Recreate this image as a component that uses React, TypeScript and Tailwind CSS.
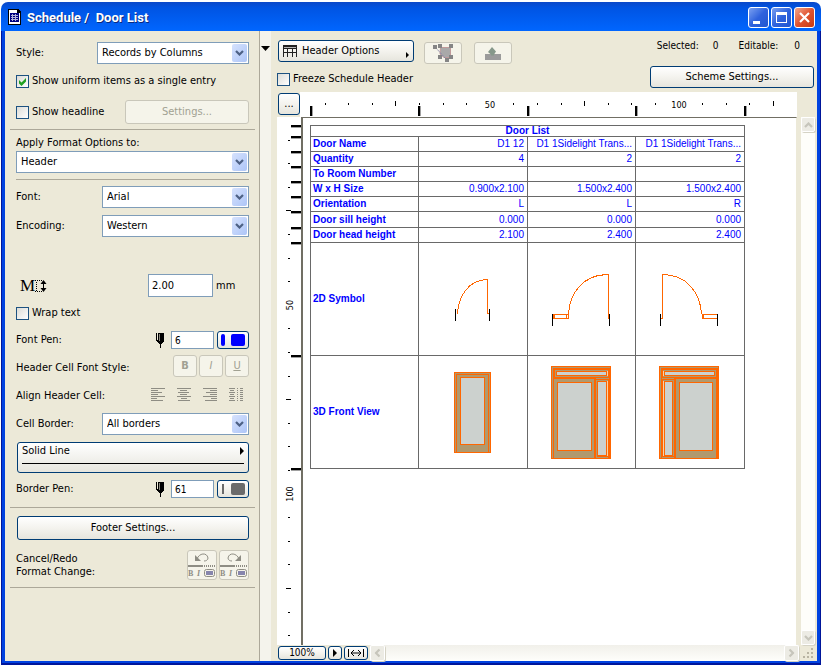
import React from 'react';
import clsx from 'clsx';

const RULER_STEP = 23.6;

const columnEdges = [310, 418, 527, 635, 744];
const rowEdges = [125, 136, 151, 166, 181, 196, 211, 227, 242, 355, 468];

const textRows = [
  { label: 'Door Name', values: ['D1 12', 'D1 1Sidelight Trans...', 'D1 1Sidelight Trans...'], height: 'h-[15px]' },
  { label: 'Quantity', values: ['4', '2', '2'], height: 'h-[15px]' },
  { label: 'To Room Number', values: ['', '', ''], height: 'h-[15px]' },
  { label: 'W x H Size', values: ['0.900x2.100', '1.500x2.400', '1.500x2.400'], height: 'h-[15px]' },
  { label: 'Orientation', values: ['L', 'L', 'R'], height: 'h-[15px]' },
  { label: 'Door sill height', values: ['0.000', '0.000', '0.000'], height: 'h-[16px]' },
  { label: 'Door head height', values: ['2.100', '2.400', '2.400'], height: 'h-[15px]' },
];

const Chevron = ({ className }: { className?: string }) => (
  <svg viewBox="0 0 9 6" className={clsx('w-[9px] h-[6px]', className)}>
    <path d="M1 1 L4.5 4.5 L8 1" fill="none" stroke="currentColor" strokeWidth="2.2" />
  </svg>
);

const Select = ({ id, value, className }: { id: string; value: string; className?: string }) => (
  <div className={clsx('relative h-[22px]', className)}>
    <select
      id={id}
      defaultValue={value}
      className="appearance-none w-full h-full bg-white border border-[#7f9db9] pl-1 pr-5 leading-[20px] outline-none"
    >
      <option>{value}</option>
    </select>
    <span className="pointer-events-none absolute right-[2px] top-[2px] w-[15px] h-[18px] rounded-[2px] bg-linear-to-br from-[#d6e2fd] to-[#adc5f7] text-[#4d6185] flex items-center justify-center">
      <Chevron />
    </span>
  </div>
);

const Check = ({ id, label, checked }: { id: string; label: string; checked?: boolean }) => (
  <div className="flex items-center gap-[3px] h-[14px]">
    <span className="relative w-[13px] h-[13px] shrink-0">
      <input
        id={id}
        type="checkbox"
        defaultChecked={checked}
        className="peer appearance-none block w-[13px] h-[13px] border border-[#1d5281] bg-linear-to-br from-[#dcdcd7] to-white"
      />
      <svg viewBox="0 0 13 13" className="pointer-events-none absolute inset-0 hidden peer-checked:block">
        <path d="M3 5v3.500L5.500 11L10 6.500V3L5.500 7.500z" fill="#21a121" />
      </svg>
    </span>
    <label htmlFor={id} className="whitespace-nowrap">{label}</label>
  </div>
);

const Button = ({
  children,
  className,
  disabled,
  label,
}: {
  children: React.ReactNode;
  className?: string;
  disabled?: boolean;
  label?: string;
}) => (
  <button
    type="button"
    aria-label={label}
    disabled={disabled}
    className={clsx(
      'rounded-[3px] border flex items-center justify-center',
      disabled
        ? 'border-[#c9c7ba] bg-[#f5f4ea] text-[#a1a192]'
        : 'border-[#003c74] bg-linear-to-b from-white via-[#f4f3ee] to-[#e6e5dd]',
      className,
    )}
  >
    {children}
  </button>
);

const Divider = ({ className }: { className?: string }) => <hr className={clsx('border-0 h-px bg-[#aca899]', className)} />;

const PenIcon = () => (
  <svg viewBox="0 0 8 15" className="w-[8px] h-[15px]" shapeRendering="crispEdges">
    <path d="M0 0h1v7h1V0h6v9H7v1H6v1H5v4H4v-4H3v-1H2V9H1V8H0z" />
    <path d="M3 1v7" stroke="#ece9d8" strokeWidth="0.600" />
  </svg>
);

const PenRow = ({
  id,
  label,
  value,
  line,
  swatch,
}: {
  id: string;
  label: string;
  value: string;
  line: React.ReactNode;
  swatch: string;
}) => (
  <div className="flex items-center h-[18px]">
    <label htmlFor={id} className="flex-1">{label}</label>
    <PenIcon />
    <input
      id={id}
      defaultValue={value}
      className="ml-[7px] w-[43px] h-[18px] bg-white border border-[#7f9db9] px-[3px] text-[10px] outline-none"
    />
    <Button label={`${label} color`} className="ml-[3px] w-[32px] h-[18px] gap-[6px]">
      {line}
      <span className={clsx('w-[14px] h-[12px] rounded-[2px]', swatch)} />
    </Button>
  </div>
);

const AlignIcon = ({ kind }: { kind: 'left' | 'center' | 'right' | 'split' }) => {
  const widths = [14, 7, 11, 7, 14, 6, 12];
  return (
    <svg viewBox="0 0 14 14" className="w-[14px] h-[14px]" fill="#8e8d84" shapeRendering="crispEdges">
      {widths.map((w, i) => {
        if (kind === 'split') {
          return (
            <g key={i}>
              <rect x={i % 2} y={i * 2} width={i % 2 ? 4 : 6} height="1" />
              <rect x="8" y={i * 2} width="1" height="1" />
              <rect x="11" y={i * 2} width="3" height="1" />
            </g>
          );
        }
        const x = kind === 'left' ? 0 : kind === 'right' ? 14 - w : Math.floor((14 - w) / 2);
        return <rect key={i} x={x} y={i * 2} width={w} height="1" />;
      })}
    </svg>
  );
};

const HistoryIcon = ({ redo }: { redo?: boolean }) => (
  <svg viewBox="0 0 28 28" className="w-[28px] h-[28px]">
    <g transform={redo ? 'translate(28 0) scale(-1 1)' : undefined}>
      <path d="M9 8C11 2 19 1 20 7C20 9 18 10 16 10" fill="none" stroke="#8e8d84" />
      <path d="M7 4v6h6z" fill="#8e8d84" />
    </g>
    <path d="M0 15h15" stroke="#8e8d84" strokeWidth="2" />
    <path d="M16 15h12" stroke="#8e8d84" strokeWidth="2" strokeDasharray="1 1" />
    <text x="0" y="25" className="font-['Liberation_Serif',serif] text-[8px] font-bold" fill="#8e8d84">B</text>
    <text x="9" y="25" className="font-['Liberation_Serif',serif] text-[8px] font-bold italic" fill="#8e8d84">I</text>
    <rect x="16.500" y="18.500" width="10" height="7" rx="2" fill="#f5f4ea" stroke="#8e8d84" />
    <rect x="18" y="20" width="7" height="4" fill="#8685ad" />
  </svg>
);

const FormatPanel = () => (
  <section className="w-[255px] shrink-0 border-r border-[#aca899] pl-[11px] pr-[10px] pt-[11px] flex flex-col">
    <div className="flex items-center justify-between">
      <label htmlFor="style">Style:</label>
      <Select id="style" value="Records by Columns" className="w-[152px]" />
    </div>
    <div className="mt-[10px]">
      <Check id="uniform" label="Show uniform items as a single entry" checked />
    </div>
    <div className="mt-3 flex items-center justify-between">
      <Check id="headline" label="Show headline" />
      <Button disabled className="w-[124px] h-[24px]">Settings...</Button>
    </div>
    <Divider className="mt-[5px] -mx-[6px]" />
    <label htmlFor="apply" className="mt-[6px]">Apply Format Options to:</label>
    <Select id="apply" value="Header" className="mt-px" />
    <Divider className="mt-[6px]" />
    <div className="mt-[6px] flex items-center justify-between">
      <label htmlFor="font">Font:</label>
      <Select id="font" value="Arial" className="w-[147px]" />
    </div>
    <div className="mt-[7px] flex items-center justify-between">
      <label htmlFor="encoding">Encoding:</label>
      <Select id="encoding" value="Western" className="w-[147px]" />
    </div>
    <div className="mt-[37px] flex items-center h-[23px]">
      <span className="ml-1 flex-1 flex items-center">
        <span className="font-['Liberation_Serif',serif] text-[17px] leading-[20px]">M</span>
        <svg viewBox="0 0 12 14" className="w-[12px] h-[14px]">
          <path d="M0 1.500h7M0 12.500h7M1.500 3v9" stroke="#000" strokeDasharray="1 1" />
          <path d="M8.500 3v8" stroke="#000" />
          <path d="M5.500 5L8.500 1l3 4zM5.500 9l3 4 3-4z" />
        </svg>
      </span>
      <input
        id="size"
        aria-label="Text height"
        defaultValue="2.00"
        className="w-[65px] h-[23px] bg-white border border-[#7f9db9] px-[3px] outline-none"
      />
      <label htmlFor="size" className="w-[36px] pl-[3px]">mm</label>
    </div>
    <div className="mt-[9px]">
      <Check id="wrap" label="Wrap text" />
    </div>
    <div className="mt-[11px]">
      <PenRow
        id="fontpen"
        label="Font Pen:"
        value="6"
        line={<span className="w-[4px] h-[12px] rounded-[2px] bg-[#0000ff]" />}
        swatch="bg-[#0000ff]"
      />
    </div>
    <div className="mt-[6px] flex items-center justify-between">
      <span className="pt-1">Header Cell Font Style:</span>
      <div className="flex gap-[2px]">
        <Button disabled className="w-[24px] h-[22px] font-bold">B</Button>
        <Button disabled className="w-[24px] h-[22px] italic">I</Button>
        <Button disabled className="w-[24px] h-[22px] underline">U</Button>
      </div>
    </div>
    <div className="mt-[10px] h-[16px] flex items-center justify-between">
      <span className="pt-[2px]">Align Header Cell:</span>
      <div className="flex gap-[12px] pr-[6px]">
        <AlignIcon kind="left" />
        <AlignIcon kind="center" />
        <AlignIcon kind="right" />
        <AlignIcon kind="split" />
      </div>
    </div>
    <div className="mt-[10px] flex items-center justify-between">
      <label htmlFor="border">Cell Border:</label>
      <Select id="border" value="All borders" className="w-[147px]" />
    </div>
    <button
      type="button"
      className="mt-[7px] ml-px h-[31px] flex flex-col rounded-[3px] border border-[#003c74] bg-linear-to-b from-white to-[#e6e5dd] px-1"
    >
      <span className="w-full flex items-center justify-between border-b border-black h-[21px] pb-1">
        Solid Line
        <svg viewBox="0 0 4 8" className="w-[4px] h-[8px]"><path d="M0 0L4 4L0 8z" /></svg>
      </span>
    </button>
    <div className="mt-[7px]">
      <PenRow
        id="borderpen"
        label="Border Pen:"
        value="61"
        line={<span className="w-[2px] h-[10px] mx-px bg-[#6b6b6b]" />}
        swatch="bg-[#6b6b6b]"
      />
    </div>
    <Divider className="mt-[9px] -mx-[6px]" />
    <Button className="mt-2 ml-px h-[24px]">Footer Settings...</Button>
    <div className="mt-[10px] flex justify-between">
      <p className="leading-[13px] pt-[2px]">
        Cancel/Redo
        <br />
        Format Change:
      </p>
      <div className="flex gap-[2px]">
        <Button disabled label="Cancel format change" className="w-[30px] h-[30px]"><HistoryIcon /></Button>
        <Button disabled label="Redo format change" className="w-[30px] h-[30px]"><HistoryIcon redo /></Button>
      </div>
    </div>
    <Divider className="mt-[7px] -mx-[6px]" />
  </section>
);

const HorizontalRuler = () => (
  <svg className="flex-1 min-w-0 h-[25px] bg-white" shapeRendering="crispEdges">
    {Array.from({ length: 20 }, (_, i) => {
      const n = i + 1;
      const x = Math.round(n * RULER_STEP) + 1;
      if (n % 8 === 0) {
        return <text key={n} x={x} y="16" textAnchor="middle" className="text-[9px]">{(n / 8) * 50}</text>;
      }
      return <rect key={n} x={x} y={n % 4 ? 11 : 9} width="1" height={n % 4 ? 2 : 5} />;
    })}
    {columnEdges.map((x) => (
      <g key={x}>
        <rect x={x - 300} y="14" width="2" height="10" />
        <rect x={x - 298} y="14" width="1" height="10" fill="#a0a0a0" />
      </g>
    ))}
  </svg>
);

const VerticalRuler = () => (
  <svg className="w-[24px] shrink-0 h-full bg-white" shapeRendering="crispEdges">
    {Array.from({ length: 22 }, (_, i) => {
      const n = i + 1;
      const y = Math.round(n * RULER_STEP) - 1;
      if (n % 8 === 0) {
        return (
          <text key={n} transform={`translate(16 ${y}) rotate(-90)`} textAnchor="middle" className="text-[9px]">
            {(n / 8) * 50}
          </text>
        );
      }
      return <rect key={n} x={n % 4 ? 11 : 9} y={y} width={n % 4 ? 2 : 5} height="1" />;
    })}
    {rowEdges.map((y) => (
      <g key={y}>
        <rect x="14" y={y - 117} width="10" height="2" />
        <rect x="14" y={y - 115} width="10" height="1" fill="#a0a0a0" />
      </g>
    ))}
  </svg>
);

// Plan symbols, one drawing per door
const planSymbols = [
  <g key="single">
    <path d="M38.500 70.500C39.500 54 49 36.500 68.500 36.500V70.500h2M38.500 66v5" fill="none" stroke="#ff6600" />
    <path d="M36.500 66v12M70.500 66v12" stroke="#000" />
  </g>,
  <g key="left">
    <path d="M40.500 71.500C41.500 50 55 31.500 80.500 31.500V75.500M25 71.500h15.500v4H25zM26.500 71.500v4M38.500 71.500v4" fill="none" stroke="#ff6600" />
    <path d="M24.500 71v12M81.500 71v12" stroke="#000" />
  </g>,
  <g key="right">
    <path d="M65.500 71.500C64.500 50 51 31.500 26.500 31.500V75.500h-2v-4M66 71.500h15.500v4H66zM67.500 71.500v4" fill="none" stroke="#ff6600" />
    <path d="M24.500 71v12M81.500 71v12" stroke="#000" />
  </g>,
];

const frontViews = [
  <g key="single">
    <rect x="35.500" y="16.500" width="36" height="80" fill="#b0996e" stroke="#ff6600" />
    <path d="M37.500 96V18.500h32V96" fill="none" stroke="#ff6600" />
    <rect x="41.500" y="21.500" width="24" height="67" fill="#ccd1ce" stroke="#ff6600" />
  </g>,
  <g key="left">
    <rect x="23" y="10" width="60" height="93" fill="#ff6600" />
    <path d="M24.500 102V11.500H82" fill="none" stroke="#b0996e" />
    <rect x="27.500" y="14.500" width="52" height="6" fill="none" stroke="#b0996e" />
    <rect x="29" y="16" width="49" height="3" fill="#ccd1ce" />
    <rect x="26" y="23" width="40" height="79" fill="#b0996e" />
    <rect x="29.500" y="26.500" width="34" height="68" fill="#ccd1ce" stroke="#ff6600" />
    <path d="M68 22.500h13M68.500 101V24.500H80M68 101.500h12" fill="none" stroke="#b0996e" />
    <path d="M79.500 15v5M79.500 25v75" stroke="#f5d3a8" />
    <rect x="70" y="26" width="8" height="73" fill="#ccd1ce" />
  </g>,
  <g key="right">
    <rect x="23" y="10" width="60" height="93" fill="#ff6600" />
    <path d="M24.500 102V11.500H82" fill="none" stroke="#b0996e" />
    <rect x="27.500" y="14.500" width="52" height="6" fill="none" stroke="#b0996e" />
    <rect x="29" y="16" width="49" height="3" fill="#ccd1ce" />
    <rect x="40" y="23" width="40" height="79" fill="#b0996e" />
    <rect x="43.500" y="26.500" width="33" height="68" fill="#ccd1ce" stroke="#ff6600" />
    <path d="M26 22.500h12M27 24.500h10.500V100M26 101.500h12" fill="none" stroke="#b0996e" />
    <path d="M27.500 15v5M27.500 25v75" stroke="#f5d3a8" />
    <rect x="29" y="26" width="7" height="73" fill="#ccd1ce" />
  </g>,
];

const DrawingRow = ({ label, drawings }: { label: string; drawings: React.ReactNode[] }) => (
  <tr className="h-[113px]">
    <th scope="row" className="border border-[#696969] p-0 pl-[2px] text-left">{label}</th>
    {drawings.map((drawing, i) => (
      <td key={i} className="border border-[#696969] p-0">
        <svg viewBox="0 0 107 112" className="block w-[107px] h-[112px]" shapeRendering="crispEdges">{drawing}</svg>
      </td>
    ))}
  </tr>
);

const DoorTable = () => (
  <table className="w-[435px] table-fixed border-collapse font-['Liberation_Sans',sans-serif] text-[10px] leading-[10px] text-[#0000ff]">
    <colgroup>
      <col className="w-[108px]" />
      <col className="w-[109px]" />
      <col className="w-[108px]" />
      <col className="w-[109px]" />
    </colgroup>
    <thead>
      <tr className="h-[11px]">
        <th colSpan={4} className="border border-[#696969] p-0">Door List</th>
      </tr>
    </thead>
    <tbody>
      {textRows.map((row) => (
        <tr key={row.label} className={row.height}>
          <th scope="row" className="border border-[#696969] p-0 pl-[2px] text-left whitespace-nowrap">{row.label}</th>
          {row.values.map((value, i) => (
            <td key={i} className="border border-[#696969] p-0 pr-[3px] text-right whitespace-nowrap">{value}</td>
          ))}
        </tr>
      ))}
      <DrawingRow label="2D Symbol" drawings={planSymbols} />
      <DrawingRow label="3D Front View" drawings={frontViews} />
    </tbody>
  </table>
);

const ScrollButton = ({ label, turn, className }: { label: string; turn?: string; className?: string }) => (
  <button
    type="button"
    aria-label={label}
    className={clsx(
      'shrink-0 rounded-[2px] border border-white bg-[#ecebe4] text-[#c6c5bb] shadow-[1px_1px_0_#d5d3c5] flex items-center justify-center',
      className,
    )}
  >
    <Chevron className={turn} />
  </button>
);

const Toolbar = () => (
  <div className="flex justify-between h-[61px] pl-[7px] pr-[3px]">
    <div className="pt-[9px]">
      <div className="flex items-start">
        <Button className="w-[136px] h-[22px] px-1">
          <svg viewBox="0 0 14 12" className="w-[14px] h-[12px] mr-[5px]" shapeRendering="crispEdges">
            <path d="M0 0h14v12h-1V4H1v8H0z" fill="#222" />
            <path d="M0 0h14v4H0zM4 4h1v8H4zM9 4h1v8H9zM1 7h12v1H1z" fill="#222" />
            <path d="M1 2.500h12" stroke="#b8b8b8" />
          </svg>
          <span className="flex-1 text-left">Header Options</span>
          <svg viewBox="0 0 3 6" className="w-[3px] h-[6px] mt-2"><path d="M0 0L3 3L0 6z" /></svg>
        </Button>
        <Button disabled label="Select in plan" className="ml-[10px] mt-[2px] w-[38px] h-[22px]">
          <svg viewBox="0 0 20 18" className="w-[20px] h-[18px]">
            <path d="M7.500 3.500h10v10H11L7 10z" fill="#a9a9a9" stroke="#c09a9a" />
            <path d="M3 4L13 15" stroke="#8583a8" strokeDasharray="2 1" />
            <path d="M0 1h4v4H0zM5 0h4v4H5zM16 0h4v4h-4zM5 11h4v4H5zM16 11h4v4h-4zM12 14h4v4h-4z" fill="#858585" />
          </svg>
        </Button>
        <Button disabled label="Select in 3D" className="ml-3 mt-[2px] w-[38px] h-[22px]">
          <svg viewBox="0 0 16 14" className="w-[16px] h-[14px]">
            <rect y="8" width="16" height="6" fill="#9b9b9b" />
            <path d="M7 1l4 4.500-2 3v1H6v-1L3 6z" fill="#86988a" />
          </svg>
        </Button>
      </div>
      <div className="mt-[8px] -ml-px">
        <Check id="freeze" label="Freeze Schedule Header" />
      </div>
    </div>
    <div className="flex flex-col items-end pt-[8px]">
      <div className="flex text-[10px] leading-[14px] pr-[14px]">
        <span>Selected:</span>
        <span className="ml-[14px]">0</span>
        <span className="ml-5">Editable:</span>
        <span className="ml-4">0</span>
      </div>
      <Button className="mt-[13px] w-[164px] h-[22px]">Scheme Settings...</Button>
    </div>
  </div>
);

const TitleBar = () => (
  <header className="h-[29px] shrink-0 rounded-t-[7px] flex items-center pl-[7px] pr-[6px] bg-linear-to-b from-[#0a48c8] from-0% via-[#0054e3] via-20% to-[#0066ff]">
    <svg viewBox="0 0 13 16" className="w-[13px] h-[16px]" shapeRendering="crispEdges">
      <path d="M0 0h10l3 3v13H0z" fill="#000" />
      <path d="M1 1h8v3h3v11H1z" fill="#fff" />
      <path d="M2 4h9v9H2z" fill="#000080" />
      <path d="M4.500 5v7M7.500 5v7M3 6.500h7M3 8.500h7M3 10.500h7" stroke="#fff" strokeOpacity="0.700" />
    </svg>
    <h1 className="ml-[6px] pt-[2px] flex-1 text-[13px] font-bold text-white whitespace-pre [text-shadow:1px_1px_0_#0a2a80] font-['Roboto','Liberation_Sans',sans-serif]">
      Schedule /  Door List
    </h1>
    <div className="flex gap-[2px] pt-[2px]">
      <button type="button" aria-label="Minimize" className="w-[21px] h-[21px] rounded-[3px] border border-white bg-linear-to-br from-[#7b9ff0] via-[#2f62dd] to-[#2157d0]">
        <svg viewBox="0 0 19 19"><path d="M4 13h7v3H4z" fill="#fff" /></svg>
      </button>
      <button type="button" aria-label="Maximize" className="w-[21px] h-[21px] rounded-[3px] border border-white bg-linear-to-br from-[#7b9ff0] via-[#2f62dd] to-[#2157d0]">
        <svg viewBox="0 0 19 19"><path d="M4 4h11v11H4zM5 7v7h9V7z" fill="#fff" fillRule="evenodd" /></svg>
      </button>
      <button type="button" aria-label="Close" className="w-[21px] h-[21px] rounded-[3px] border border-white bg-linear-to-br from-[#f0a58b] via-[#e0532f] to-[#c63a10]">
        <svg viewBox="0 0 19 19"><path d="M5 5l9 9M14 5l-9 9" stroke="#fff" strokeWidth="2.200" /></svg>
      </button>
    </div>
  </header>
);

const App: React.FC = () => (
  <div className="min-h-screen flex flex-col pt-[2px] pl-px bg-white font-['DejaVu_Sans_Condensed','Noto_Sans',sans-serif] text-[11px] leading-[14px] text-black">
    <TitleBar />
    <div className="flex-1 flex flex-col border-x border-b-2 border-[#00169a]">
      <main className="flex-1 flex bg-[#ece9d8] border-x-[3px] border-b-2 border-[#0042e0]">
        <FormatPanel />
        <div className="w-[11px] shrink-0 bg-[#f4f3ec] pt-[15px]">
          <button type="button" aria-label="Collapse panel" className="block w-[9px] h-[5px] mx-auto">
            <svg viewBox="0 0 9 5"><path d="M0 0h9L4.500 5z" /></svg>
          </button>
        </div>
        <section className="flex-1 min-w-0 flex flex-col">
          <Toolbar />
          <div className="flex pl-[6px] pr-[20px]">
            <Button label="Ruler options" className="ml-px mt-px w-[22px] h-[22px]">...</Button>
            <HorizontalRuler />
          </div>
          <div className="flex-1 flex pl-[6px]">
            <VerticalRuler />
            <div className="flex-1 min-w-0 bg-white border-l-2 border-t border-[#716f64] border-r border-r-[#ece9d8] p-[7px] overflow-hidden">
              <DoorTable />
            </div>
            <div className="w-[20px] shrink-0 pl-[4px] pr-[2px] flex flex-col">
              <div className="flex-1 flex flex-col justify-between bg-[#fefefa]">
                <ScrollButton label="Scroll up" turn="rotate-180" className="h-[15px]" />
                <ScrollButton label="Scroll down" className="h-[15px]" />
              </div>
            </div>
          </div>
          <div className="h-[16px] flex pl-[7px] pr-[2px]">
            <Button className="w-[48px] h-[14px] mt-px text-[10px]">100%</Button>
            <Button label="Zoom menu" className="ml-[2px] w-[14px] h-[14px] mt-px">
              <svg viewBox="0 0 4 8" className="w-[4px] h-[8px]"><path d="M0 0L4 4L0 8z" /></svg>
            </Button>
            <Button label="Fit width" className="ml-[2px] w-[24px] h-[14px] mt-px">
              <svg viewBox="0 0 18 10" className="w-[18px] h-[10px] shrink-0">
                <path d="M1.500 1v8M16.500 1v8M4 5h10M7 2L4 5l3 3M11 2l3 3-3 3" fill="none" stroke="#000" />
              </svg>
            </Button>
            <div className="ml-[2px] flex-1 flex justify-between bg-linear-to-b from-[#f1f0ea] to-[#fefefb]">
              <ScrollButton label="Scroll left" turn="rotate-90" className="w-[15px]" />
              <ScrollButton label="Scroll right" turn="-rotate-90" className="w-[15px]" />
            </div>
            <svg viewBox="0 0 16 14" className="w-[16px] h-[14px]" fill="#b8b4a2">
              <path d="M12 3h2v2h-2zM8 7h2v2H8zM12 7h2v2h-2zM4 11h2v2H4zM8 11h2v2H8zM12 11h2v2h-2z" />
            </svg>
          </div>
        </section>
      </main>
    </div>
  </div>
);

export default App;
